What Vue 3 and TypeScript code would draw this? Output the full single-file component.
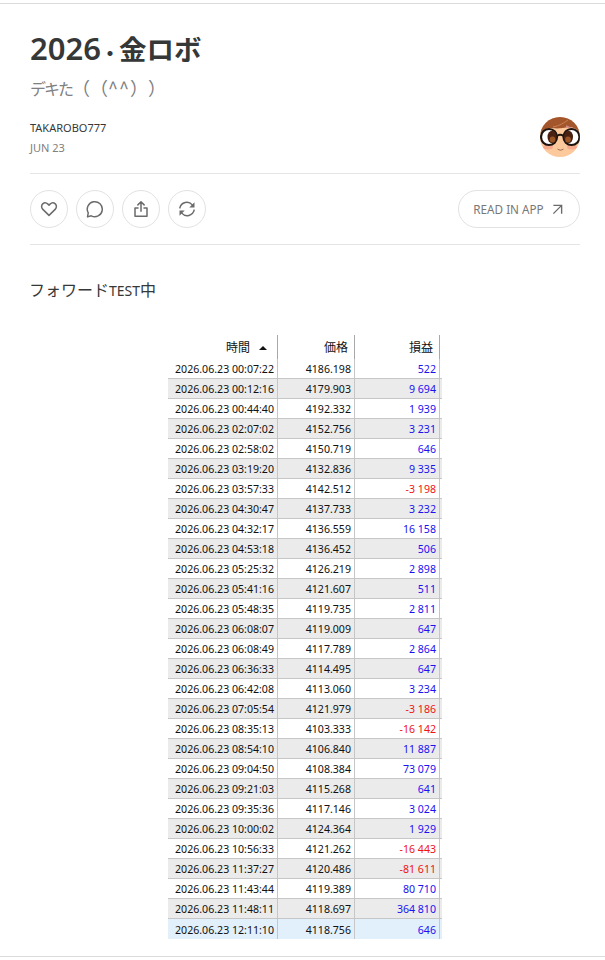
<script setup lang="ts">
interface Row {
    time: string
    price: string
    profit: string
}

const rows: Row[] = [
    { time: '2026.06.23 00:07:22', price: '4186.198', profit: '522' },
    { time: '2026.06.23 00:12:16', price: '4179.903', profit: '9 694' },
    { time: '2026.06.23 00:44:40', price: '4192.332', profit: '1 939' },
    { time: '2026.06.23 02:07:02', price: '4152.756', profit: '3 231' },
    { time: '2026.06.23 02:58:02', price: '4150.719', profit: '646' },
    { time: '2026.06.23 03:19:20', price: '4132.836', profit: '9 335' },
    { time: '2026.06.23 03:57:33', price: '4142.512', profit: '-3 198' },
    { time: '2026.06.23 04:30:47', price: '4137.733', profit: '3 232' },
    { time: '2026.06.23 04:32:17', price: '4136.559', profit: '16 158' },
    { time: '2026.06.23 04:53:18', price: '4136.452', profit: '506' },
    { time: '2026.06.23 05:25:32', price: '4126.219', profit: '2 898' },
    { time: '2026.06.23 05:41:16', price: '4121.607', profit: '511' },
    { time: '2026.06.23 05:48:35', price: '4119.735', profit: '2 811' },
    { time: '2026.06.23 06:08:07', price: '4119.009', profit: '647' },
    { time: '2026.06.23 06:08:49', price: '4117.789', profit: '2 864' },
    { time: '2026.06.23 06:36:33', price: '4114.495', profit: '647' },
    { time: '2026.06.23 06:42:08', price: '4113.060', profit: '3 234' },
    { time: '2026.06.23 07:05:54', price: '4121.979', profit: '-3 186' },
    { time: '2026.06.23 08:35:13', price: '4103.333', profit: '-16 142' },
    { time: '2026.06.23 08:54:10', price: '4106.840', profit: '11 887' },
    { time: '2026.06.23 09:04:50', price: '4108.384', profit: '73 079' },
    { time: '2026.06.23 09:21:03', price: '4115.268', profit: '641' },
    { time: '2026.06.23 09:35:36', price: '4117.146', profit: '3 024' },
    { time: '2026.06.23 10:00:02', price: '4124.364', profit: '1 929' },
    { time: '2026.06.23 10:56:33', price: '4121.262', profit: '-16 443' },
    { time: '2026.06.23 11:37:27', price: '4120.486', profit: '-81 611' },
    { time: '2026.06.23 11:43:44', price: '4119.389', profit: '80 710' },
    { time: '2026.06.23 11:48:11', price: '4118.697', profit: '364 810' },
    { time: '2026.06.23 12:11:10', price: '4118.756', profit: '646' }
]

const rowClass = (index: number) => {
    if (index === rows.length - 1) return 'selected'
    return index % 2 === 1 ? 'striped' : ''
}
</script>

<template>
    <div class="page">
        <header class="head">
            <h1 class="title">2026<span class="dot">・</span><span class="jp">金ロボ</span></h1>
            <h2 class="subtitle"><span class="tight">デキた</span>（（<span class="caret">^^</span>））</h2>
            <div class="meta">
                <div>
                    <div class="author">TAKAROBO777</div>
                    <div class="date">JUN 23</div>
                </div>
                <svg class="avatar" viewBox="0 0 40 40">
                    <defs>
                        <clipPath id="face"><circle cx="20" cy="20" r="20" /></clipPath>
                    </defs>
                    <g clip-path="url(#face)">
                        <rect width="40" height="40" fill="#fcc99d" />
                        <path d="M0 0h40v15c-3-3-7-5-11-5-6 1-11 2-17 1-5 0-9 2-12 5z" fill="#a3552c" />
                        <path d="M13 10c6-1 11-4 15-7" stroke="#c98052" stroke-width="1" fill="none" />
                        <path d="M26 9l9 4" stroke="#d08a8a" stroke-width="1.500" />
                        <ellipse cx="8" cy="30" rx="5" ry="2.500" fill="#f7a98c" />
                        <ellipse cx="32" cy="30" rx="5" ry="2.500" fill="#f7a98c" />
                        <circle cx="9" cy="20" r="8" fill="#fff" stroke="#1d1410" stroke-width="2.200" />
                        <circle cx="31.500" cy="20" r="8" fill="#fff" stroke="#1d1410" stroke-width="2.200" />
                        <path d="M17 19c2-1.500 4.500-1.500 6.500 0" stroke="#1d1410" stroke-width="1.800" fill="none" />
                        <ellipse cx="12" cy="20" rx="4.500" ry="6.200" fill="#4a2110" />
                        <ellipse cx="28.500" cy="20" rx="4.500" ry="6.200" fill="#4a2110" />
                        <ellipse cx="12.500" cy="22.500" rx="2.800" ry="3" fill="#9a5426" />
                        <ellipse cx="28" cy="22.500" rx="2.800" ry="3" fill="#9a5426" />
                        <path d="M17.500 32c2 1.500 4 1.500 6 0" stroke="#8a5a3a" stroke-width="0.800" fill="none" />
                    </g>
                </svg>
            </div>
        </header>

        <div class="actions">
            <div class="icon-buttons">
                <button class="circle" aria-label="like">
                    <svg viewBox="0 0 24 24"><path d="M12 20.500 3.800 12.500C1.600 10.300 1.600 7 3.600 5.200c2-1.800 5-1.600 7 .3L12 7l1.400-1.500c2-1.900 5-2.100 7-.3 2 1.800 2 5.100-.2 7.300z" /></svg>
                </button>
                <button class="circle" aria-label="comment">
                    <svg viewBox="0 0 24 24"><path d="M2 22.500l1-5.300a10 10 0 1 1 4 3.900z" /></svg>
                </button>
                <button class="circle" aria-label="share">
                    <svg viewBox="0 0 24 24"><path d="M12 15V2.500M7.800 6.500l4.200-4.200 4.200 4.200M8 10.500H4v11h16v-11h-4" /></svg>
                </button>
                <button class="circle" aria-label="restack">
                    <svg viewBox="0 0 24 24">
                        <path d="M2.500 10.500A9.500 9.500 0 0 1 19 6.500M21.500 13.500A9.500 9.500 0 0 1 5 17.500" />
                        <path class="solid" d="M22 3v7h-7zM2 21v-7h7z" />
                    </svg>
                </button>
            </div>
            <button class="read-app">
                READ IN APP
                <svg viewBox="0 0 12 12"><path d="M1.500 1.500h9v9M10.500 1.500l-9 9" /></svg>
            </button>
        </div>

        <p class="body-text">フォワード<span class="small">TEST</span>中</p>

        <div class="table-wrap">
            <table class="history">
                <thead>
                    <tr>
                        <th class="col-time">時間<span class="sort"></span></th>
                        <th class="col-price">価格</th>
                        <th class="col-profit">損益</th>
                        <th class="col-rest"></th>
                    </tr>
                </thead>
                <tbody>
                    <tr v-for="(row, index) in rows" :key="row.time" :class="rowClass(index)">
                        <td>{{ row.time }}</td>
                        <td>{{ row.price }}</td>
                        <td :class="row.profit.startsWith('-') ? 'loss' : 'gain'">{{ row.profit }}</td>
                        <td></td>
                    </tr>
                </tbody>
            </table>
        </div>
    </div>
</template>

<style>
html,
body {
    background: #fff;
}
</style>

<style scoped>
.page {
    width: 605px;
    height: 954px;
    box-sizing: border-box;
    margin-top: 3px;
    border-top: 1px solid #dcdcdc;
    border-bottom: 1px solid #dcdcdc;
    overflow: hidden;
    font-family: "Noto Sans", "Open Sans", "Noto Sans CJK JP", sans-serif;
    color: #363737;
    text-spacing-trim: space-all;
}

.head {
    padding: 0 25px 0 30px;
}

.title {
    margin: 0;
    padding-top: 22px;
    font-family: "Noto Sans", "Noto Sans CJK JP", sans-serif;
    font-size: 31px;
    line-height: 44px;
    font-weight: 600;
}

.dot {
    font-family: "Noto Sans CJK JP", sans-serif;
    font-size: 18px;
    font-weight: 900;
}

.jp {
    font-family: "Noto Sans CJK JP", sans-serif;
    font-size: 27.500px;
}

.subtitle {
    margin: 0;
    font-family: "Noto Sans CJK JP", sans-serif;
    font-size: 18px;
    line-height: 26px;
    font-weight: 400;
    color: #808080;
}

.tight {
    font-size: 16px;
    letter-spacing: -2px;
}

.caret {
    letter-spacing: 1px;
}

.meta {
    display: flex;
    justify-content: space-between;
    align-items: flex-start;
    margin-top: 16px;
    padding-bottom: 16px;
    border-bottom: 1px solid #e5e5e5;
}

.author {
    font-size: 11px;
    line-height: 18px;
    padding-top: 2px;
}

.date {
    font-size: 11px;
    line-height: 18px;
    margin-top: 2px;
    color: #808080;
}

.avatar {
    width: 40px;
    height: 40px;
    display: block;
}

.actions {
    display: flex;
    justify-content: space-between;
    margin: 0 25px 0 30px;
    padding: 16px 0;
    border-bottom: 1px solid #e5e5e5;
}

.icon-buttons {
    display: flex;
    gap: 8px;
}

.circle {
    width: 38px;
    height: 38px;
    padding: 0;
    display: flex;
    align-items: center;
    justify-content: center;
    background: #fff;
    border: 1px solid #e2e2e2;
    border-radius: 50%;
}

.circle svg {
    width: 18px;
    height: 18px;
    fill: none;
    stroke: #6b6b6b;
    stroke-width: 2;
    stroke-linejoin: round;
    stroke-linecap: round;
}

.circle svg .solid {
    fill: #6b6b6b;
    stroke: none;
}

.read-app {
    width: 122px;
    height: 38px;
    display: flex;
    align-items: center;
    justify-content: center;
    gap: 8px;
    padding: 0 2px 0 0;
    background: #fff;
    border: 1px solid #e2e2e2;
    border-radius: 19px;
    font-family: inherit;
    font-size: 11.700px;
    color: #777;
}

.read-app svg {
    width: 11px;
    height: 11px;
    fill: none;
    stroke: #6b6b6b;
    stroke-width: 1.500;
}

.body-text {
    margin: 32px 0 0 29px;
    font-family: "Noto Sans CJK JP", sans-serif;
    font-size: 16px;
    line-height: 24px;
}

.small {
    font-family: "Noto Sans", sans-serif;
    font-size: 14px;
}

.table-wrap {
    display: flex;
    margin: 32px 0 0 168px;
}

.history {
    border-collapse: separate;
    border-spacing: 0;
    table-layout: fixed;
    width: 274px;
    font-family: "Noto Sans", "Noto Sans CJK JP", sans-serif;
    font-size: 10.600px;
    color: #111;
}

.history th {
    box-sizing: border-box;
    height: 24px;
    padding: 0 6px 2px 0;
    text-align: right;
    font-weight: 400;
    font-family: "Noto Sans CJK JP", sans-serif;
    font-size: 12px;
    border-right: 1px solid #a8a8a8;
}

.col-time {
    width: 110px;
}

.col-price {
    width: 77px;
}

.col-profit {
    width: 85px;
}

.history th.col-rest {
    width: 2px;
    padding: 0;
    border-right: none;
}

.sort {
    display: inline-block;
    width: 0;
    height: 0;
    margin: 0 4px 2px 9px;
    border-left: 4px solid transparent;
    border-right: 4px solid transparent;
    border-bottom: 4px solid #111;
}

.history td {
    height: 20px;
    box-sizing: border-box;
    padding: 1px 3px 0 0;
    line-height: 18px;
    text-align: right;
    white-space: nowrap;
    border-right: 1px solid #c6c6c6;
    border-bottom: 1px solid #c6c6c6;
}

.history td:last-child {
    padding: 0;
    border-right: none;
}

.history tr.striped td {
    background: #ebebeb;
}

.history tr.selected td {
    background: #e2f0fc;
    border-bottom: none;
}

.gain {
    color: #1a12f0;
}

.loss {
    color: #f01414;
}
</style>
